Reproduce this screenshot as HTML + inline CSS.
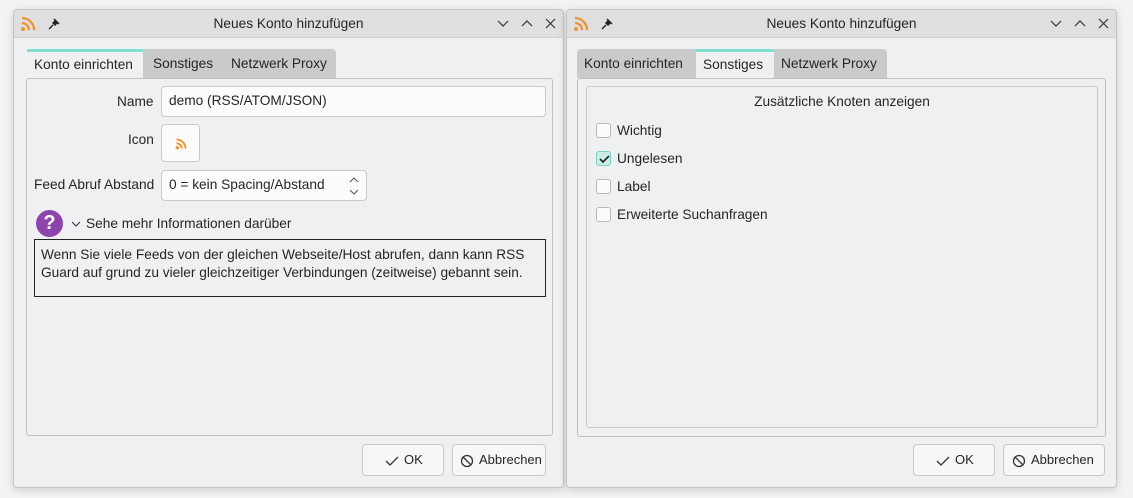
<!DOCTYPE html>
<html><head><meta charset="utf-8"><style>
*{box-sizing:border-box;margin:0;padding:0}
body{width:1133px;height:498px;background:#f3f3f3;font-family:"Liberation Sans",sans-serif;font-size:13.7px;color:#232627;position:relative;overflow:hidden}
.a{position:absolute;white-space:nowrap}
.win{position:absolute;top:9px;width:551px;height:479px;background:#eff0f1;border:1px solid #c4c5c6;border-radius:4px;box-shadow:0 2px 8px rgba(0,0,0,.15);overflow:hidden}
.title{position:absolute;left:0;top:0;right:0;height:28px;background:#dedfe0;border-bottom:1px solid #cfd0d1;text-align:center;line-height:27px}
.tab{position:absolute;top:39px;height:29px;line-height:29px;padding:0 7px;background:#c9cacb;white-space:nowrap}
.tab.act{background:#eff0f1;border-top:3px solid #7de0d0;line-height:25px}
.pane{position:absolute;border:1px solid #bfc0c1;border-radius:3px;background:#eff0f1}
.field{position:absolute;background:#fcfcfc;border:1px solid #c8c9ca;border-radius:4px;padding-left:7px;line-height:28px}
.btn{position:absolute;background:#f7f7f7;border:1px solid #c8c9ca;border-radius:4px;line-height:30px;white-space:nowrap;font-size:13px}
.cb{position:absolute;width:15px;height:15px;border:1px solid #b8b9ba;border-radius:3px;background:#fcfcfc}
</style></head><body>

<div class="win" style="left:13px">
 <div class="title">Neues Konto hinzufügen
  <svg class="a" style="left:6px;top:6px" width="16" height="16" viewBox="0 0 16 16"><circle cx="3" cy="13" r="2" fill="#f0932b"/><path d="M2 7a7 7 0 0 1 7 7M2 2a12 12 0 0 1 12 12" stroke="#f0932b" stroke-width="2.3" fill="none"/></svg>
  <svg class="a" style="left:33px;top:7px" width="14" height="14" viewBox="0 0 14 14"><path d="M8 3l3 3-3 3-3-3z" fill="#222"/><path d="M7 2l5 5" stroke="#222" stroke-width="1.5"/><path d="M6 8l-4 4" stroke="#222" stroke-width="1.3"/></svg>
  <svg class="a" style="left:482px;top:8px" width="72" height="12"><path d="M2 3l5 5 5-5M26 8l5-5 5 5M50 1l9 9M59 1l-9 9" stroke="#333" stroke-width="1.2" fill="none"/></svg>
 </div>
 <div class="tab act" style="left:13px;width:116px">Konto einrichten</div>
 <div class="tab" style="left:129px;width:78px;padding-left:10px">Sonstiges</div>
 <div class="tab" style="left:207px;width:115px;border-radius:0 4px 0 0;padding-left:10px">Netzwerk Proxy</div>
 <div class="pane" style="left:12px;top:68px;width:527px;height:358px"></div>
 <div class="a" style="left:103px;top:84px">Name</div>
 <div class="field" style="left:147px;top:76px;width:385px;height:31px">demo (RSS/ATOM/JSON)</div>
 <div class="a" style="left:114px;top:122px">Icon</div>
 <div class="field" style="left:147px;top:114px;width:39px;height:38px;padding:0">
  <svg class="a" style="left:13px;top:13px" width="12" height="12" viewBox="0 0 16 16"><circle cx="3" cy="13" r="2.2" fill="#f0932b"/><path d="M2 7a7 7 0 0 1 7 7M2 2a12 12 0 0 1 12 12" stroke="#f0932b" stroke-width="2.5" fill="none"/></svg></div>
 <div class="a" style="left:20px;top:167px">Feed Abruf Abstand</div>
 <div class="field" style="left:147px;top:160px;width:206px;height:31px">0 = kein Spacing/Abstand
  <svg class="a" style="left:186px;top:5px" width="12" height="20"><path d="M2 6l4-4 4 4M2 14l4 4 4-4" stroke="#555" fill="none"/></svg></div>
 <div class="a" style="left:22px;top:200px;width:27px;height:27px;border-radius:50%;background:#8e44ad;color:#fff;font-weight:bold;font-size:20px;text-align:center;line-height:27px">?</div>
 <svg class="a" style="left:57px;top:210px" width="10" height="8"><path d="M1 2l4 4 4-4" stroke="#333" fill="none"/></svg>
 <div class="a" style="left:72px;top:206px">Sehe mehr Informationen darüber</div>
 <div class="a" style="left:20px;top:229px;width:512px;height:58px;border:1px solid #222;padding:6px 6px;line-height:18px;background:#eff0f1;white-space:normal">Wenn Sie viele Feeds von der gleichen Webseite/Host abrufen, dann kann RSS Guard auf grund zu vieler gleichzeitiger Verbindungen (zeitweise) gebannt sein.</div>
 <div class="btn" style="left:348px;top:434px;width:82px;height:32px"><svg class="a" style="left:22px;top:10px" width="14" height="12"><path d="M1 6l4 4 8-8" stroke="#333" stroke-width="1.3" fill="none"/></svg><span class="a" style="left:41px">OK</span></div>
 <div class="btn" style="left:438px;top:434px;width:94px;height:32px"><svg class="a" style="left:7px;top:9px" width="14" height="14"><circle cx="7" cy="7" r="5.5" stroke="#333" stroke-width="1.3" fill="none"/><path d="M3 3l8 8" stroke="#333" stroke-width="1.3"/></svg><span class="a" style="left:26px">Abbrechen</span></div>
</div>

<div class="win" style="left:566px">
 <div class="title">Neues Konto hinzufügen
  <svg class="a" style="left:6px;top:6px" width="16" height="16" viewBox="0 0 16 16"><circle cx="3" cy="13" r="2" fill="#f0932b"/><path d="M2 7a7 7 0 0 1 7 7M2 2a12 12 0 0 1 12 12" stroke="#f0932b" stroke-width="2.3" fill="none"/></svg>
  <svg class="a" style="left:33px;top:7px" width="14" height="14" viewBox="0 0 14 14"><path d="M8 3l3 3-3 3-3-3z" fill="#222"/><path d="M7 2l5 5" stroke="#222" stroke-width="1.5"/><path d="M6 8l-4 4" stroke="#222" stroke-width="1.3"/></svg>
  <svg class="a" style="left:482px;top:8px" width="72" height="12"><path d="M2 3l5 5 5-5M26 8l5-5 5 5M50 1l9 9M59 1l-9 9" stroke="#333" stroke-width="1.2" fill="none"/></svg>
 </div>
 <div class="tab" style="left:10px;width:119px;border-radius:4px 0 0 0">Konto einrichten</div>
 <div class="tab act" style="left:129px;width:78px">Sonstiges</div>
 <div class="tab" style="left:207px;width:113px;border-radius:0 4px 0 0">Netzwerk Proxy</div>
 <div class="pane" style="left:10px;top:68px;width:529px;height:359px"></div>
 <div class="pane" style="left:19px;top:76px;width:512px;height:342px;border-color:#c8c9ca"></div>
 <div class="a" style="left:19px;width:512px;top:84px;text-align:center">Zusätzliche Knoten anzeigen</div>
 <div class="cb" style="left:29px;top:113px"></div><div class="a" style="left:50px;top:113px">Wichtig</div>
 <div class="cb" style="left:29px;top:141px;background:#c9eee8;border-color:#7dd0c4"><svg class="a" style="left:1px;top:1px" width="12" height="12"><path d="M2 6l3 3 6-6" stroke="#222" stroke-width="1.6" fill="none"/></svg></div><div class="a" style="left:50px;top:141px">Ungelesen</div>
 <div class="cb" style="left:29px;top:169px"></div><div class="a" style="left:50px;top:169px">Label</div>
 <div class="cb" style="left:29px;top:197px"></div><div class="a" style="left:50px;top:197px">Erweiterte Suchanfragen</div>
 <div class="btn" style="left:346px;top:434px;width:82px;height:32px"><svg class="a" style="left:22px;top:10px" width="14" height="12"><path d="M1 6l4 4 8-8" stroke="#333" stroke-width="1.3" fill="none"/></svg><span class="a" style="left:41px">OK</span></div>
 <div class="btn" style="left:436px;top:434px;width:102px;height:32px"><svg class="a" style="left:8px;top:9px" width="14" height="14"><circle cx="7" cy="7" r="5.5" stroke="#333" stroke-width="1.3" fill="none"/><path d="M3 3l8 8" stroke="#333" stroke-width="1.3"/></svg><span class="a" style="left:27px">Abbrechen</span></div>
</div>
</body></html>
